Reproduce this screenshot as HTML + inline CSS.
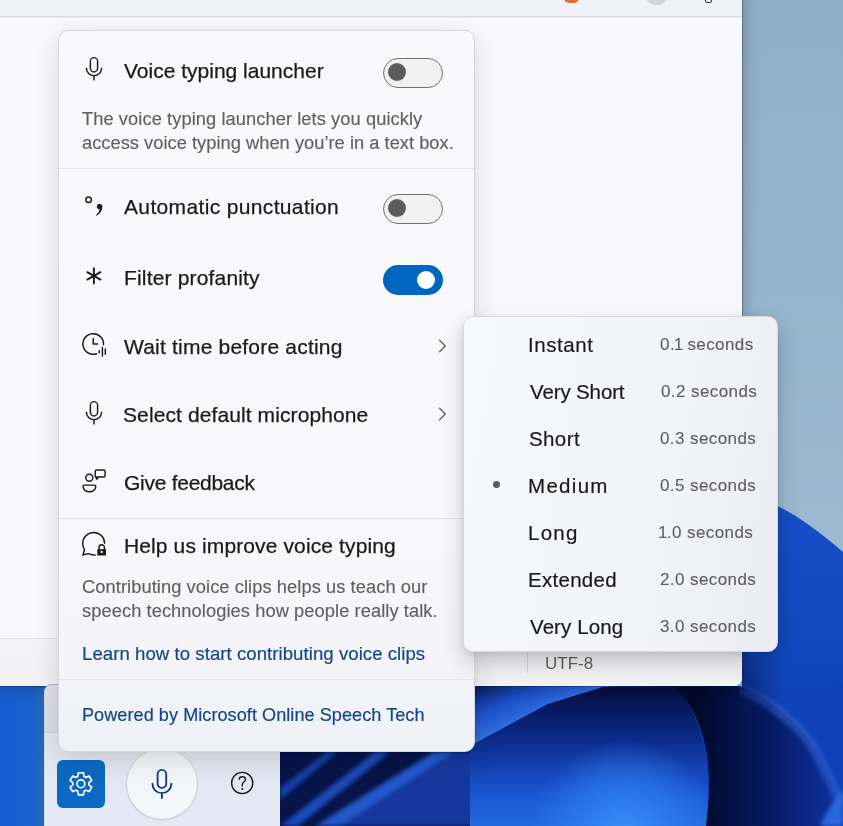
<!DOCTYPE html>
<html><head><meta charset="utf-8">
<style>
*{box-sizing:border-box;margin:0;padding:0}
html,body{width:843px;height:826px;overflow:hidden}
body{position:relative;font-family:"Liberation Sans",sans-serif;background:#93b3cb}
.abs{position:absolute}
#wall{left:0;top:0;width:843px;height:826px}
#notepad{left:-10px;top:-10px;width:752px;height:696px;background:#f9f9fb;border-radius:0 0 8px 8px;box-shadow:0 0 0 1px rgba(20,30,60,.3),0 0 18px rgba(0,0,0,.28)}
#np-top{left:0;top:0;width:742px;height:17px;background:#eff1f9;border-bottom:1px solid #dcdde3;box-shadow:0 1px 0 #ebecf0;overflow:hidden}
#np-status{left:-10px;top:638px;width:752px;height:48px;background:linear-gradient(180deg,#f4f4f6 0%,#f1f1f4 80%,#f3f4f8 100%);border-top:1px solid #e0e0e4;border-radius:0 0 8px 8px}
.txt{white-space:nowrap;line-height:1;will-change:transform}
#fly{left:58px;top:30px;width:417px;height:722px;background:linear-gradient(180deg,#f9f9fb 0%,#f8f8fa 70%,#f5f5f9 85%,#eff1f6 100%);border:1px solid #d6d6db;border-radius:10px;box-shadow:0 8px 28px rgba(0,0,0,.13),0 0 4px rgba(0,0,0,.04)}
.sep{left:0;width:415px;height:1px;background:#e5e5e8}
.title{font-size:21px;color:#1a1a1a;-webkit-text-stroke:0.25px #1a1a1a}
.desc{font-size:18.3px;color:#606060;-webkit-text-stroke:0.15px #606060}
.link{font-size:18.6px;color:#16468a;-webkit-text-stroke:0.2px #16468a}
.tog{width:60px;height:30px;border-radius:15px}
.tog.off{border:1.6px solid #727272;background:#f1f1f2}
.tog.off .k{position:absolute;left:3.6px;top:4.4px;width:18px;height:18px;border-radius:50%;background:#5c5c5c}
.tog.on{background:#0067c0}
.tog.on .k{position:absolute;left:34px;top:6px;width:18px;height:18px;border-radius:50%;background:#fff}
#sub{left:463px;top:316px;width:315px;height:336px;background:linear-gradient(100deg,#f7f8fb 0%,#f3f4f8 60%,#ebecf4 100%);border:1px solid #d6d7dc;border-radius:10px;box-shadow:0 10px 22px rgba(0,0,0,.2),0 2px 6px rgba(0,0,0,.08)}
.item{font-size:20.5px;color:#1a1a1a;-webkit-text-stroke:0.2px #1a1a1a}
.secs{font-size:17px;color:#5f5f5f;letter-spacing:0.42px;-webkit-text-stroke:0.12px #5f5f5f}
.one{letter-spacing:-0.9px}
.one2{letter-spacing:-0.6px}
#panel{left:44px;top:684px;width:236px;height:150px;background:linear-gradient(180deg,#dde1ec 0px,#d9dce7 48px,#e3e7f1 49px,#e5e9f3 100%);border-radius:8px 8px 0 0;box-shadow:inset 0 1px 0 rgba(0,0,0,.22),inset 1px 0 0 rgba(0,0,0,.05)}
#icons{left:0;top:0;width:843px;height:826px;pointer-events:none}
</style></head><body>
<svg id="wall" class="abs" width="843" height="826" viewBox="0 0 843 826">
  <defs>
    <linearGradient id="sky" x1="0" y1="0" x2="0" y2="1">
      <stop offset="0" stop-color="#8db0c9"/>
      <stop offset="0.6" stop-color="#9ab8d0"/>
      <stop offset="1" stop-color="#a6c0d6"/>
    </linearGradient>
    <linearGradient id="bl" gradientUnits="userSpaceOnUse" x1="760" y1="500" x2="790" y2="690">
      <stop offset="0" stop-color="#1650c8"/>
      <stop offset="1" stop-color="#1044bc"/>
    </linearGradient>
    <radialGradient id="cornerdark" gradientUnits="userSpaceOnUse" cx="742" cy="688" r="45">
      <stop offset="0" stop-color="#061450" stop-opacity="0.6"/>
      <stop offset="0.5" stop-color="#061a5c" stop-opacity="0.3"/>
      <stop offset="1" stop-color="#061a5c" stop-opacity="0"/>
    </radialGradient>
    <linearGradient id="petal" gradientUnits="userSpaceOnUse" x1="0" y1="690" x2="0" y2="826">
      <stop offset="0" stop-color="#050f44"/>
      <stop offset="0.35" stop-color="#0b2a8a"/>
      <stop offset="0.75" stop-color="#1a55d0"/>
      <stop offset="1" stop-color="#2468e0"/>
    </linearGradient>
    <radialGradient id="petalglow" gradientUnits="userSpaceOnUse" cx="625" cy="835" r="95">
      <stop offset="0" stop-color="#3a92fa" stop-opacity="1"/>
      <stop offset="0.6" stop-color="#2c7ef0" stop-opacity="0.6"/>
      <stop offset="1" stop-color="#2c7ef0" stop-opacity="0"/>
    </radialGradient>
    <linearGradient id="navy" gradientUnits="userSpaceOnUse" x1="700" y1="0" x2="843" y2="0">
      <stop offset="0" stop-color="#020a2c"/>
      <stop offset="0.5" stop-color="#061a66"/>
      <stop offset="1" stop-color="#0d35a4"/>
    </linearGradient>
    <linearGradient id="leftblue" x1="0" y1="0" x2="1" y2="0">
      <stop offset="0" stop-color="#145ed2"/>
      <stop offset="0.7" stop-color="#1a62cc"/>
      <stop offset="1" stop-color="#2a68b8"/>
    </linearGradient>
    <linearGradient id="tri" gradientUnits="userSpaceOnUse" x1="480" y1="688" x2="500" y2="735">
      <stop offset="0" stop-color="#0b2470"/>
      <stop offset="0.45" stop-color="#1a50c8"/>
      <stop offset="1" stop-color="#3474e4"/>
    </linearGradient>
    <linearGradient id="rightb" gradientUnits="userSpaceOnUse" x1="740" y1="686" x2="843" y2="760">
      <stop offset="0" stop-color="#1244bc"/>
      <stop offset="1" stop-color="#0f40b6"/>
    </linearGradient>
    <filter id="blur2" x="-20%" y="-20%" width="140%" height="140%"><feGaussianBlur stdDeviation="2.2"/></filter>
  </defs>
  <rect x="0" y="0" width="843" height="826" fill="url(#sky)"/>
  <path d="M742 496 C770 498 800 515 843 552 L843 826 L742 826 Z" fill="url(#bl)"/>
  <rect x="0" y="686" width="843" height="140" fill="#0c3aa8"/>
  <rect x="0" y="686" width="46" height="140" fill="url(#leftblue)"/>
  <!-- region 1: dark with stripes -->
  <rect x="280" y="686" width="200" height="140" fill="#061449"/>
  <g filter="url(#blur2)">
  <path d="M280 788 L327 752 L337 752 L280 800 Z" fill="#173fa8"/>
  <path d="M280 826 L375 752 L390 752 L298 826 Z" fill="#1a4ab8"/>
  <path d="M315 826 L434 752 L455 752 L340 826 Z" fill="#2358cc"/>
  <path d="M340 826 L455 752 L480 752 L480 826 Z" fill="#12399e"/>
  </g>
  <!-- region 2 upper-left triangle -->
  <path d="M470 686 L610 686 L548 704 L470 746 Z" fill="url(#tri)"/>
  <!-- petal below edge -->
  <path d="M470 746 L548 704 L603 687 L676 686 C700 715 714 760 706 826 L470 826 Z" fill="url(#petal)"/>
  <path d="M470 746 L548 704 L603 687 L676 686 C700 715 714 760 706 826 L470 826 Z" fill="url(#petalglow)"/>
  <!-- navy band -->
  <path d="M674 686 L738 686 C760 692 790 715 809 739 C820 755 830 780 843 803 L843 826 L706 826 C714 770 708 720 674 686 Z" fill="url(#navy)"/>
  <!-- right blue region -->
  <path d="M738 686 L843 686 L843 803 C830 780 820 755 809 739 C790 715 760 692 738 686 Z" fill="url(#rightb)"/>
  <path d="M742 690 C760 696 790 717 809 741 C820 757 830 782 843 805" stroke="#3468d8" stroke-width="10" fill="none" opacity="0.55" filter="url(#blur2)"/>
  <path d="M820 826 C830 805 838 795 843 790 L843 826 Z" fill="#2a68e0" filter="url(#blur2)"/>
  <rect x="742" y="630" width="60" height="80" fill="url(#cornerdark)"/>
</svg>

<div id="notepad" class="abs"></div>
<div id="np-top" class="abs">
  <div class="abs" style="left:564px;top:-6px;width:15px;height:8.5px;border-radius:0 0 5px 5px;background:#e9673d"></div>
  <div class="abs" style="left:644px;top:-20px;width:25px;height:25px;border-radius:50%;background:#d3d3d7"></div>
  <div class="abs" style="left:705px;top:-6px;width:6.5px;height:9px;border-radius:0 0 2px 2px;border:1.5px solid #333"></div>
</div>
<div id="np-status" class="abs">
  <div class="abs" style="left:537px;top:14px;width:1px;height:20px;background:#d8d8dc"></div>
  <div class="abs txt" style="left:555px;top:15.5px;font-size:17px;color:#5f5f5f">UTF-8</div>
</div>

<div id="panel" class="abs">
  <div class="abs" style="left:0;top:48px;width:236px;height:1px;background:#cdd0da"></div>
  <div class="abs" style="left:13px;top:76px;width:48px;height:48px;border-radius:6px;background:#0b69c3"></div>
  <div class="abs" style="left:83px;top:65px;width:70px;height:70px;border-radius:50%;background:#f5f6fa;box-shadow:0 0 0 1px rgba(0,0,0,.06),0 1px 3px rgba(0,0,0,.12)"></div>
</div>

<div id="fly" class="abs">
  <div class="abs sep" style="top:137px"></div>
  <div class="abs sep" style="top:487px"></div>
  <div class="abs sep" style="top:648px"></div>

  <div class="abs txt title" style="left:65px;top:29px">Voice typing launcher</div>
  <div class="abs tog off" style="left:324px;top:27px"><div class="k"></div></div>
  <div class="abs txt desc" style="left:23px;top:79px;letter-spacing:0.07px">The voice typing launcher lets you quickly</div>
  <div class="abs txt desc" style="left:23px;top:103px;letter-spacing:0.02px">access voice typing when you’re in a text box.</div>

  <div class="abs txt title" style="left:65px;top:165px;letter-spacing:0.35px">Automatic punctuation</div>
  <div class="abs tog off" style="left:324px;top:163px"><div class="k"></div></div>

  <div class="abs txt title" style="left:65px;top:236px;letter-spacing:0.17px">Filter profanity</div>
  <div class="abs tog on" style="left:324px;top:234px"><div class="k"></div></div>

  <div class="abs txt title" style="left:65px;top:305px;letter-spacing:0.2px">Wait time before acting</div>
  <div class="abs txt title" style="left:64px;top:373px;letter-spacing:0.1px">Select default microphone</div>
  <div class="abs txt title" style="left:65px;top:441px;letter-spacing:-0.27px">Give feedback</div>

  <div class="abs txt title" style="left:65px;top:504px;letter-spacing:0.12px">Help us improve voice typing</div>
  <div class="abs txt desc" style="left:23px;top:547px;letter-spacing:0.07px">Contributing voice clips helps us teach our</div>
  <div class="abs txt desc" style="left:23px;top:571px;letter-spacing:0.07px">speech technologies how people really talk.</div>
  <div class="abs txt link" style="left:23px;top:614px;letter-spacing:0.05px">Learn how to start contributing voice clips</div>
  <div class="abs txt link" style="left:23px;top:675px;font-size:18.1px;letter-spacing:0.05px">Powered by Microsoft Online Speech Tech</div>
</div>

<div id="sub" class="abs">
  <div class="abs txt item" style="left:64px;top:17.5px;letter-spacing:0.58px">Instant</div>
  <div class="abs txt secs" style="left:196px;top:18.5px">0<span class="one">.1</span> seconds</div>
  <div class="abs txt item" style="left:66px;top:64.5px;letter-spacing:-0.13px">Very Short</div>
  <div class="abs txt secs" style="left:197px;top:65.5px">0.2 seconds</div>
  <div class="abs txt item" style="left:65px;top:111.5px;letter-spacing:0.4px">Short</div>
  <div class="abs txt secs" style="left:196px;top:112.5px">0.3 seconds</div>
  <div class="abs txt item" style="left:64px;top:158.5px;letter-spacing:1.3px">Medium</div>
  <div class="abs txt secs" style="left:196px;top:159.5px">0.5 seconds</div>
  <div class="abs txt item" style="left:64px;top:205.5px;letter-spacing:1.27px">Long</div>
  <div class="abs txt secs" style="left:196px;top:206.5px"><span class="one2" style="margin-left:-2px">1</span>.0 seconds</div>
  <div class="abs txt item" style="left:64px;top:252.5px;letter-spacing:0.28px">Extended</div>
  <div class="abs txt secs" style="left:196px;top:253.5px">2.0 seconds</div>
  <div class="abs txt item" style="left:66px;top:299.5px;letter-spacing:0.09px">Very Long</div>
  <div class="abs txt secs" style="left:196px;top:300.5px">3.0 seconds</div>
  <div class="abs" style="left:28.5px;top:163.5px;width:7px;height:7px;border-radius:50%;background:#5c5c5c"></div>
</div>

<svg id="icons" class="abs" width="843" height="826" viewBox="0 0 843 826" fill="none" stroke-linecap="round" stroke-linejoin="round">
  <g stroke="#1b1b1b" stroke-width="1.45">
    <!-- mic row1 -->
    <rect x="90.4" y="57.6" width="7.2" height="14.3" rx="3.6"/>
    <path d="M86.4 68.2 A7.6 7.6 0 0 0 101.6 68.2 M94 75.8 V80"/>
    <!-- punctuation -->
    <circle cx="88.6" cy="199.7" r="2.8"/>
    <!-- clock -->
    <path d="M96.7 353.7 A10.3 10.3 0 1 1 103.5 344.7"/>
    <path d="M93.2 338.5 V344 H97.6"/>
    <path d="M99.2 350.8 V352.8 M102.4 347.5 V355.9 M105.3 348.9 V354.2"/>
    <!-- mic row5 -->
    <rect x="90.4" y="401.6" width="7.2" height="14.3" rx="3.6"/>
    <path d="M86.4 412.2 A7.6 7.6 0 0 0 101.6 412.2 M94 419.8 V424"/>
    <!-- feedback -->
    <circle cx="89.3" cy="477.8" r="3.5"/>
    <path d="M84.2 485.1 H94.6 Q95.8 485.1 95.8 486.3 C95.8 489.8 92.6 491.7 89.4 491.7 C86.2 491.7 83 489.8 83 486.3 Q83 485.1 84.2 485.1 Z"/>
    <path d="M96.7 476.9 H103.6 Q105.1 476.9 105.1 475.4 V471.4 Q105.1 469.9 103.6 469.9 H96.7 Q95.2 469.9 95.2 471.4 V475.4 Q95.2 476.9 96.0 477.4 L96.8 479.2 L98.6 476.9"/>
    <!-- help bubble -->
    <path d="M95.3 555.1 C92.5 555.1 90.3 554.4 88.2 553.6 L82.9 555 L84.5 549.7 C83.3 547.9 82.7 545.8 82.7 543.5 A10.9 10.9 0 0 1 104.6 543.3"/>
    <path d="M99.1 549.5 V547.3 A2.65 2.65 0 0 1 104.4 547.3 V549.5" stroke-width="1.5"/>
  </g>
  <g fill="#1b1b1b">
    <path d="M96.8 206.4 A2.8 2.8 0 1 1 102.4 207 C102.2 210.8 99.9 213.9 96.6 215.8 L96.0 214.9 C98.2 213.3 99.3 211.5 99.5 209.2 A2.8 2.8 0 0 1 96.8 206.4 Z"/>
    <path d="M97.3 549.2 H106 V555.5 H97.3 Z M101.65 550.8 A1.1 1.1 0 1 0 101.66 550.8 Z" fill-rule="evenodd"/>
  </g>
  <g stroke="#1b1b1b" stroke-width="1.9">
    <path d="M93.9 268.3 V283.5 M87.3 272.2 L100.5 279.6 M87.3 279.6 L100.5 272.2"/>
  </g>
  <g stroke="#5d5d5d" stroke-width="1.3">
    <path d="M439.5 340.3 L445.3 346 L439.5 351.7"/>
    <path d="M439.5 408.3 L445.3 414 L439.5 419.7"/>
  </g>
  <!-- gear -->
  <g stroke="#fff" stroke-width="1.6" transform="translate(80.9 783.8)">
    <circle r="3.9"/>
    <g transform="scale(1.07)">
    <path d="M-2.85 -7.05 L-2.38 -10.33 L2.38 -10.33 L2.85 -7.05 L4.68 -5.99 L7.75 -7.23 L10.14 -3.10 L7.53 -1.06 L7.53 1.06 L10.14 3.10 L7.75 7.23 L4.68 5.99 L2.85 7.05 L2.38 10.33 L-2.38 10.33 L-2.85 7.05 L-4.68 5.99 L-7.75 7.23 L-10.14 3.10 L-7.53 1.06 L-7.53 -1.06 L-10.14 -3.10 L-7.75 -7.23 L-4.68 -5.99 Z"/>
  </g></g>
  <!-- bottom mic -->
  <g stroke="#123d85" stroke-width="1.9">
    <rect x="157.6" y="769.9" width="8.6" height="18" rx="4.3"/>
    <path d="M152.4 783.6 A9.5 9.5 0 0 0 171.4 783.6 M161.9 793.1 V798"/>
  </g>
  <!-- help -->
  <g stroke="#1b1b1b" stroke-width="1.4">
    <circle cx="242.2" cy="783" r="10.6"/>
    <path d="M239.3 779.3 C239.3 777.6 240.6 776.8 242.3 776.8 C244 776.8 245.5 777.8 245.5 779.5 C245.5 781.9 242.3 782.1 242.3 784.6 V786"/>
  </g>
  <circle cx="242.3" cy="789.1" r="1" fill="#1b1b1b"/>
</svg>
</body></html>
